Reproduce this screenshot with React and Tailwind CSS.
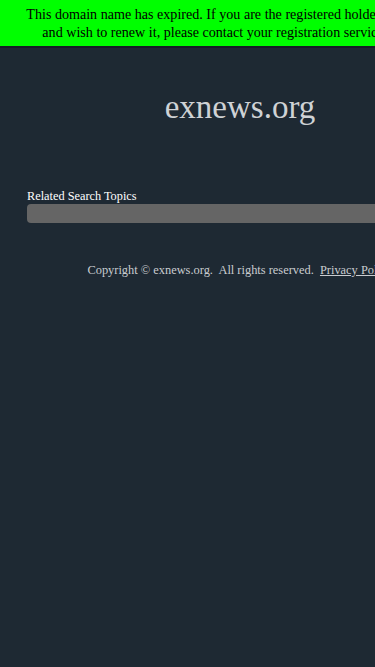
import React from 'react';

export default function App() {
    return (
        <div className="w-[480px] min-h-[667px] bg-[#1e2933] font-['Liberation_Serif',serif]">
            {/* expired notice */}
            <div className="bg-[#00ff00] border-b-2 border-[#161e26] px-2 py-[5px] text-center text-[14.1px] leading-[18px] text-black">
                This domain name has expired. If you are the registered holder of this name<br />
                and wish to renew it, please contact your registration service provider.
            </div>

            <div className="pt-[40px] text-center text-[33px] leading-[38px] text-[#cfd2d5]">
                exnews.org
            </div>

            <div className="mx-[27px] mt-[62px]">
                <div className="text-[12.3px] leading-[16px] text-white">Related Search Topics</div>
                <div className="h-[19px] rounded-[4px] bg-[#656565]"></div>
            </div>

            <div className="mt-[39px] text-center text-[12.4px] leading-[16px] text-[#c9ccd0]">
                Copyright © exnews.org.&nbsp; All rights reserved.&nbsp;&nbsp;
                <a href="#" className="underline">Privacy Policy</a>
            </div>
        </div>
    );
}
